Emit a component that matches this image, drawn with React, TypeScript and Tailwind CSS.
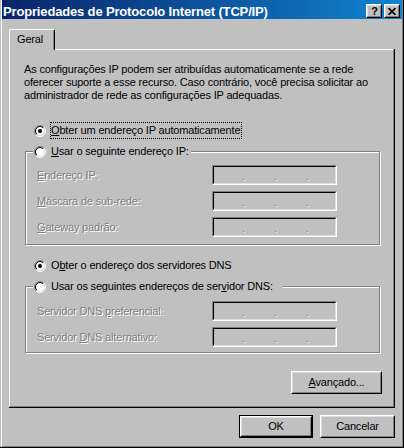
import React from "react";

const dis = "text-[#808080] [text-shadow:1px_1px_0_#ffffff]";

function Radio({ checked }: { checked?: boolean }) {
  return (
    <svg width="12" height="12" viewBox="0 0 12 12" className="shrink-0 block">
      <defs>
        <clipPath id="rbr">
          <polygon points="12,0 12,12 0,12" />
        </clipPath>
        <clipPath id="rtl">
          <polygon points="0,0 12,0 0,12" />
        </clipPath>
      </defs>
      <circle cx="6" cy="6" r="4.5" fill="#ffffff" />
      <g clipPath="url(#rtl)">
        <circle cx="6" cy="6" r="5.5" fill="none" stroke="#808080" />
        <circle cx="6" cy="6" r="4.5" fill="none" stroke="#000000" />
      </g>
      <g clipPath="url(#rbr)">
        <circle cx="6" cy="6" r="5.5" fill="none" stroke="#ffffff" />
        <circle cx="6" cy="6" r="4.5" fill="none" stroke="#dfdfdf" />
      </g>
      {checked && <circle cx="6" cy="6" r="2" fill="#000000" />}
    </svg>
  );
}

function IpBox() {
  return (
    <div className="w-[125px] h-[20px] shrink-0 border-t border-l border-[#808080] border-r border-b border-r-white border-b-white">
      <div className="h-full border-t border-l border-black border-r border-b border-r-[#dfdfdf] border-b-[#dfdfdf] flex items-center pl-[28px] gap-[29px] pt-[2px]">
        <span className={dis}>.</span>
        <span className={dis}>.</span>
        <span className={dis}>.</span>
      </div>
    </div>
  );
}

function Field({ label, mt }: { label: React.ReactNode; mt: string }) {
  return (
    <div className={`flex items-center h-[20px] ${mt}`}>
      <div className={`w-[175px] whitespace-nowrap ${dis}`}>{label}</div>
      <IpBox />
    </div>
  );
}

function Btn({
  children,
  className,
  def,
}: {
  children: React.ReactNode;
  className: string;
  def?: boolean;
}) {
  const inner = (
    <div className="h-full border-l border-t border-white border-r border-b border-r-black border-b-black">
      <div className="h-full border-l border-t border-[#dfdfdf] border-r border-b border-r-[#808080] border-b-[#808080] flex items-center justify-center">
        {children}
      </div>
    </div>
  );
  return def ? (
    <div className={`border border-black ${className}`}>{inner}</div>
  ) : (
    <div className={className}>{inner}</div>
  );
}

export default function App() {
  return (
    <div className="w-[404px] h-[448px] bg-[#c0c0c0] font-['Liberation_Sans',Arial,sans-serif] text-[11px] leading-[13px] tracking-[-0.17px] text-black border-r border-b border-black overflow-hidden">
      <div className="h-full ml-px border-l border-white border-r border-b border-r-[#808080] border-b-[#808080] flex flex-col">
        {/* Title bar */}
        <div className="h-[19px] shrink-0 bg-gradient-to-r from-[#0a246a] to-[#1084d0] flex items-start justify-between pl-px pr-[2px]">
          <span className="text-white font-bold text-[13px] leading-[16px] tracking-[-0.16px] pt-[4px] whitespace-nowrap">
            Propriedades de Protocolo Internet (TCP/IP)
          </span>
          <div className="flex gap-[2px] pt-[4px]">
            <div className="w-[16px] h-[14px] border-l border-t border-white border-r border-b border-r-black border-b-black">
              <div className="h-full border-l border-t border-[#dfdfdf] border-r border-b border-r-[#808080] border-b-[#808080] bg-[#c0c0c0] flex items-center justify-center font-bold text-[11px] leading-[11px] pl-px">
                ?
              </div>
            </div>
            <div className="w-[16px] h-[14px] border-l border-t border-white border-r border-b border-r-black border-b-black">
              <div className="h-full border-l border-t border-[#dfdfdf] border-r border-b border-r-[#808080] border-b-[#808080] bg-[#c0c0c0] flex items-center justify-center">
                <svg width="8" height="7" viewBox="0 0 8 7" className="block">
                  <path d="M0.5 0 L7.5 7 M7.5 0 L0.5 7" stroke="#000" strokeWidth="1.6" />
                </svg>
              </div>
            </div>
          </div>
        </div>

        {/* Tab area */}
        <div className="flex flex-col px-[7px] pt-[10px]">
          <div className="flex">
            <div className="relative z-10 -mb-px h-[21px] w-[46px] bg-[#c0c0c0] border-l border-t border-white border-r border-r-black rounded-t-[2px] shadow-[inset_-1px_0_0_#808080] pl-[7px] pt-[3px]">
              Geral
            </div>
          </div>
          <div className="h-[359px] border-r border-b border-black">
            <div className="h-full border-l border-t border-white border-r border-b border-r-[#808080] border-b-[#808080] flex flex-col pt-[13px]">
              <p className="ml-[14px] whitespace-nowrap">
                As configurações IP podem ser atribuídas automaticamente se a rede
                <br />
                oferecer suporte a esse recurso. Caso contrário, você precisa solicitar ao
                <br />
                administrador de rede as configurações IP adequadas.
              </p>

              <div className="ml-[24px] mt-[20px] h-[17px] flex items-center">
                <Radio checked />
                <span className="ml-[4px] border border-dotted border-black pr-px leading-[15px] whitespace-nowrap">
                  <u>O</u>bter um endereço IP automaticamente
                </span>
              </div>

              <fieldset className="ml-[15px] mr-[13px] mt-[4px] border border-[#808080] shadow-[inset_1px_1px_0_#ffffff,1px_1px_0_#ffffff] pl-[11px] pb-[7px]">
                <legend className="ml-[-4px] px-px bg-[#c0c0c0]">
                  <span className="flex items-center h-[17px] whitespace-nowrap pr-[1px]">
                    <Radio />
                    <span className="ml-[5px]">
                      <u>U</u>sar o seguinte endereço IP:
                    </span>
                  </span>
                </legend>
                <Field mt="mt-[5px]" label={<><u>E</u>ndereço IP:</>} />
                <Field mt="mt-[6px]" label={<><u>M</u>áscara de sub-rede:</>} />
                <Field mt="mt-[6px]" label={<><u>G</u>ateway padrão:</>} />
              </fieldset>

              <div className="ml-[24px] mt-[12px] h-[17px] flex items-center">
                <Radio checked />
                <span className="ml-[5px] whitespace-nowrap">
                  O<u>b</u>ter o endereço dos servidores DNS
                </span>
              </div>

              <fieldset className="ml-[15px] mr-[13px] mt-[4px] border border-[#808080] shadow-[inset_1px_1px_0_#ffffff,1px_1px_0_#ffffff] pl-[11px] pb-[5px]">
                <legend className="ml-[-4px] px-px bg-[#c0c0c0]">
                  <span className="flex items-center h-[17px] whitespace-nowrap pr-[9px]">
                    <Radio />
                    <span className="ml-[5px]">
                      Usar os seguintes endereços de ser<u>v</u>idor DNS:
                    </span>
                  </span>
                </legend>
                <Field mt="mt-[6px]" label={<>Servidor DNS <u>p</u>referencial:</>} />
                <Field mt="mt-[6px]" label={<>Servidor <u>D</u>NS alternativo:</>} />
              </fieldset>

              <Btn className="self-end mr-[11px] mt-[18px] w-[91px] h-[23px]">
                <span>
                  <u>A</u>vançado...
                </span>
              </Btn>
            </div>
          </div>
          <div className="flex justify-end gap-[7px] mt-[7px]">
            <Btn def className="w-[74px] h-[23px]">
              OK
            </Btn>
            <Btn className="w-[75px] h-[23px]">Cancelar</Btn>
          </div>
        </div>
      </div>
    </div>
  );
}
